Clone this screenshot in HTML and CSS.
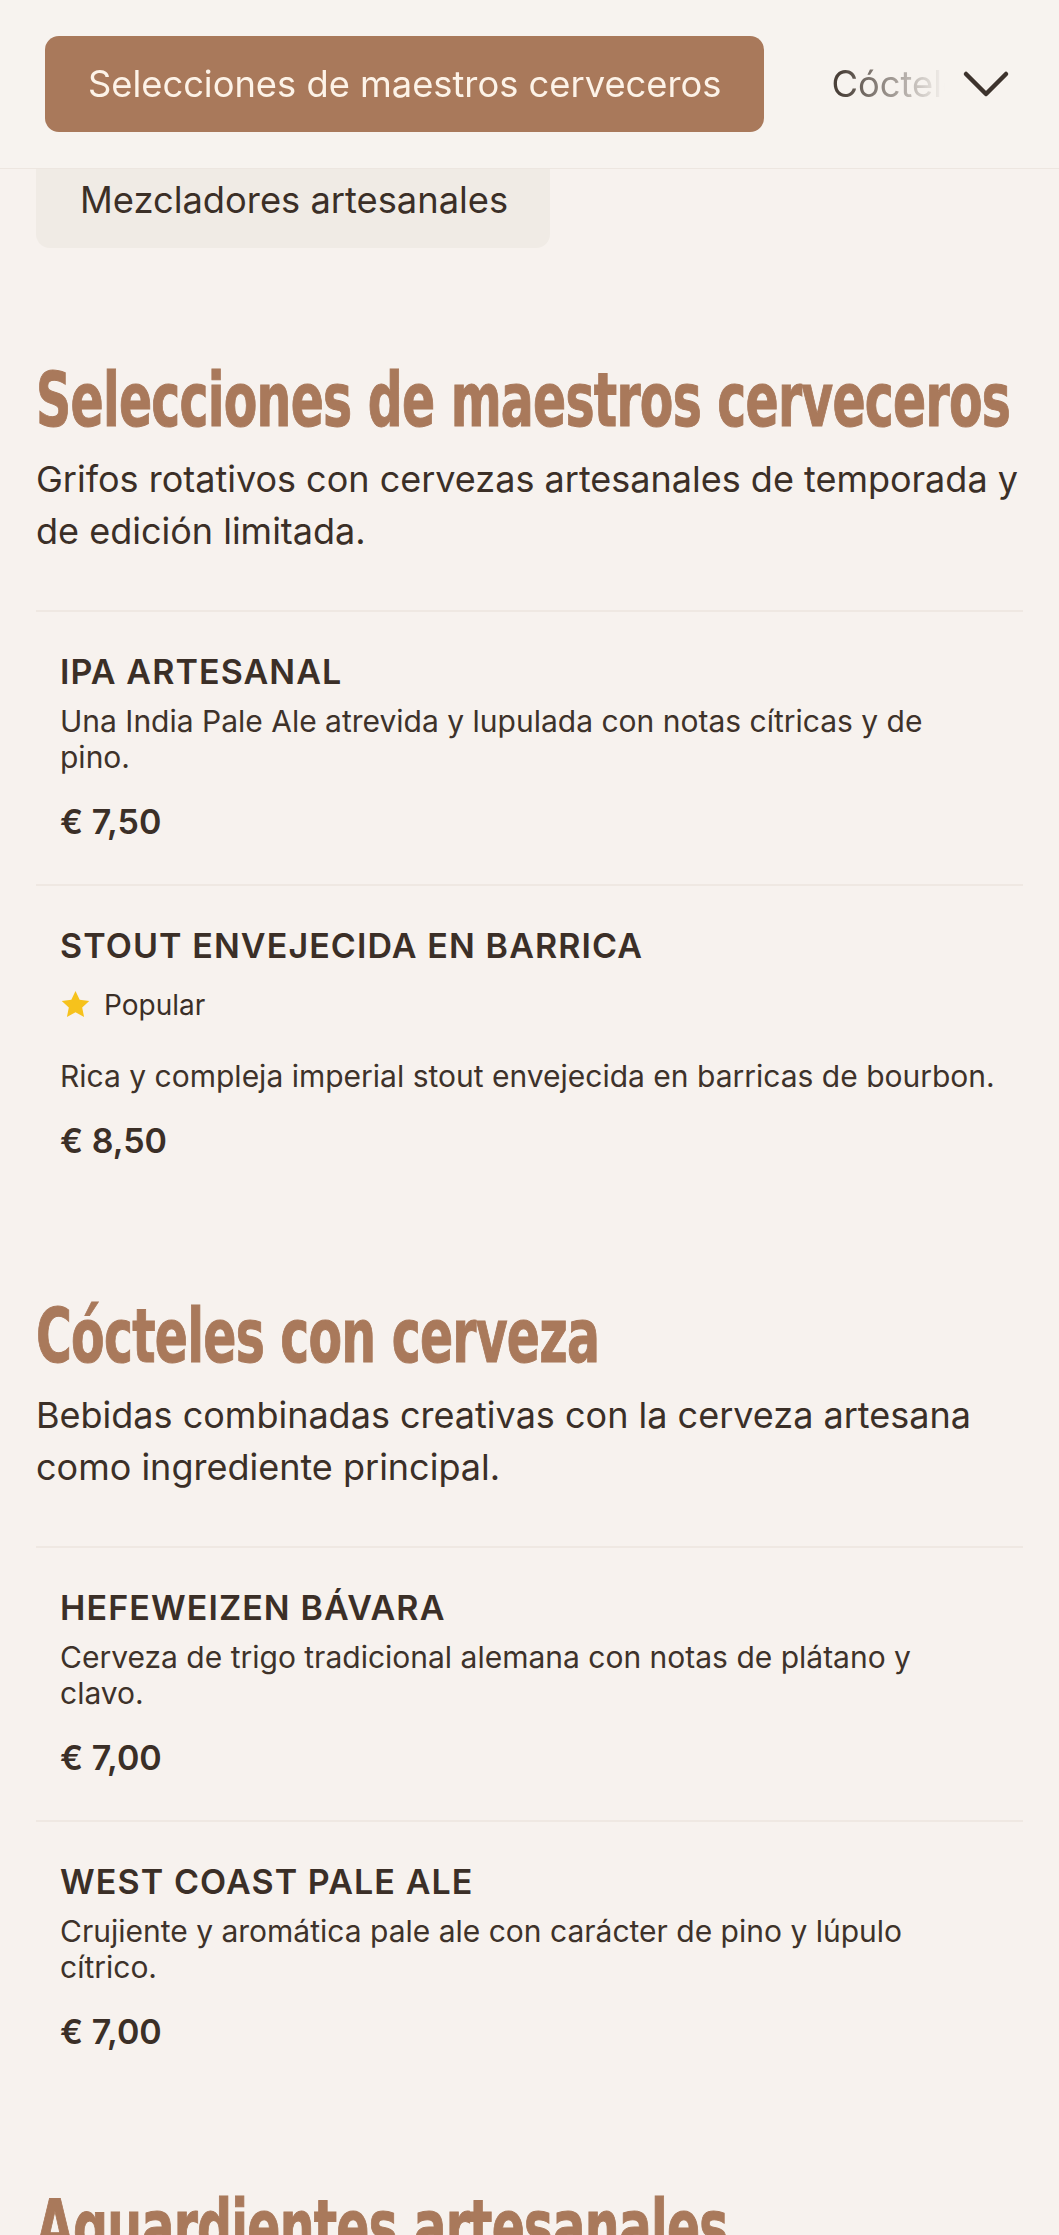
FILE: index.html
```html
<!DOCTYPE html>
<html lang="es">
<head>
<meta charset="utf-8">
<title>Carta de cervezas</title>
<link rel="stylesheet" href="styles.css">
</head>
<body>
<header class="topbar">
  <nav class="tabs">
    <button class="tab tab-active">Selecciones de maestros cerveceros</button>
    <button class="tab">Cócteles con cerveza</button>
    <button class="tab">Aguardientes artesanales</button>
  </nav>
  <button class="expand" aria-label="Mostrar categorías">
    <svg width="48" height="28" viewBox="0 0 48 28"><polyline points="4,4 24,24 44,4" fill="none" stroke="#3d332d" stroke-width="4.5" stroke-linecap="round" stroke-linejoin="round"/></svg>
  </button>
</header>

<main class="menu">
  <div class="chip-row">
    <span class="chip">Mezcladores artesanales</span>
  </div>

  <section class="category">
    <h2 class="cat-title">Selecciones de maestros cerveceros</h2>
    <p class="cat-desc">Grifos rotativos con cervezas artesanales de temporada y de edición limitada.</p>
    <ul class="items">
      <li class="item">
        <h3 class="item-name">IPA ARTESANAL</h3>
        <p class="item-desc">Una India Pale Ale atrevida y lupulada con notas cítricas y de pino.</p>
        <p class="item-price">€ 7,50</p>
      </li>
      <li class="item">
        <h3 class="item-name">STOUT ENVEJECIDA EN BARRICA</h3>
        <div class="badges">
          <svg class="star" width="31" height="29" viewBox="0 0 24 23"><path d="M12 0.8l3.3 7 7.6 0.9-5.6 5.2 1.5 7.6L12 17.7l-6.8 3.8 1.5-7.6L1.1 8.7l7.6-0.9z" fill="#f6c21c"/></svg>
          <span class="badge-text">Popular</span>
        </div>
        <p class="item-desc">Rica y compleja imperial stout envejecida en barricas de bourbon.</p>
        <p class="item-price">€ 8,50</p>
      </li>
    </ul>
  </section>

  <section class="category">
    <h2 class="cat-title">Cócteles con cerveza</h2>
    <p class="cat-desc">Bebidas combinadas creativas con la cerveza artesana como ingrediente principal.</p>
    <ul class="items">
      <li class="item">
        <h3 class="item-name">HEFEWEIZEN BÁVARA</h3>
        <p class="item-desc">Cerveza de trigo tradicional alemana con notas de plátano y clavo.</p>
        <p class="item-price">€ 7,00</p>
      </li>
      <li class="item">
        <h3 class="item-name">WEST COAST PALE ALE</h3>
        <p class="item-desc">Crujiente y aromática pale ale con carácter de pino y lúpulo cítrico.</p>
        <p class="item-price">€ 7,00</p>
      </li>
    </ul>
  </section>

  <section class="category">
    <h2 class="cat-title">Aguardientes artesanales</h2>
    <p class="cat-desc">Destilados de pequeños productores locales.</p>
  </section>
</main>
</body>
</html>
```

FILE: styles.css
```css
* { box-sizing: border-box; }

html, body {
  margin: 0;
  padding: 0;
  background: #f7f2ee;
  color: #3b2f27;
  font-family: Inter, "Noto Sans", "Liberation Sans", sans-serif;
  overflow-x: hidden;
}

.topbar {
  position: sticky;
  top: 0;
  z-index: 2;
  display: flex;
  align-items: center;
  height: 169px;
  padding: 0 49px 0 45px;
  background: #f7f3ef;
  border-bottom: 1px solid #ede6e0;
}

.tabs {
  flex: 1;
  display: flex;
  gap: 24px;
  overflow: hidden;
  margin-right: 17px;
  -webkit-mask-image: linear-gradient(to right, #000 calc(100% - 105px), transparent 100%);
  mask-image: linear-gradient(to right, #000 calc(100% - 105px), transparent 100%);
}

.tab {
  flex-shrink: 0;
  height: 96px;
  padding: 0 43px;
  border: 0;
  border-radius: 14px;
  background: transparent;
  color: #4a4039;
  font-family: Inter, "Noto Sans", sans-serif;
  font-size: 36.3px;
  font-weight: 400;
  white-space: nowrap;
}

.tab-active {
  background: #a9795b;
  color: #fdf3e8;
}

.expand {
  display: flex;
  align-items: center;
  justify-content: center;
  width: 48px;
  height: 48px;
  padding: 0;
  border: 0;
  background: transparent;
}

.menu {
  padding: 0 36px;
  overflow: hidden;
}

.chip-row {
  display: flex;
  margin-top: -17px;
}

.chip {
  display: flex;
  align-items: center;
  height: 96px;
  padding: 0 42px 0 44px;
  border-radius: 14px;
  background: #f0ebe5;
  color: #3b2f27;
  font-size: 36.3px;
  white-space: nowrap;
}

.category {
  margin-top: 112px;
}

.category + .category {
  margin-top: 93px;
}

.cat-title {
  margin: 0;
  font-family: "DejaVu Sans Condensed", "DejaVu Sans", sans-serif;
  font-weight: 700;
  font-size: 74px;
  line-height: 81px;
  letter-spacing: -1px;
  color: #a9795b;
  -webkit-text-stroke: 1px #a9795b;
  white-space: nowrap;
  transform: scaleX(0.734);
  transform-origin: left center;
}

.cat-desc {
  margin: 12px 0 0;
  font-size: 36px;
  line-height: 52px;
  color: #3b2f27;
}

.items {
  list-style: none;
  margin: 53px 0 0;
  padding: 0;
}

.item {
  padding: 39px 24px 41px;
  border-top: 2px solid #efe8e2;
}

.item-name {
  margin: 0;
  font-size: 34px;
  line-height: 42.5px;
  font-weight: 600;
  letter-spacing: 1.1px;
  color: #3b2f27;
}

.item-desc {
  margin: 9px 0 0;
  font-size: 30px;
  line-height: 36px;
  color: #3e322a;
}

.item-price {
  margin: 26px 0 0;
  font-size: 34px;
  line-height: 42.5px;
  font-weight: 600;
  color: #3b2f27;
}

.badges {
  display: flex;
  align-items: center;
  gap: 13px;
  margin: 19px 0 35px;
}

.star {
  display: block;
  flex-shrink: 0;
}

.badge-text {
  font-size: 28px;
  line-height: 36.4px;
  color: #3b2f27;
}
```
